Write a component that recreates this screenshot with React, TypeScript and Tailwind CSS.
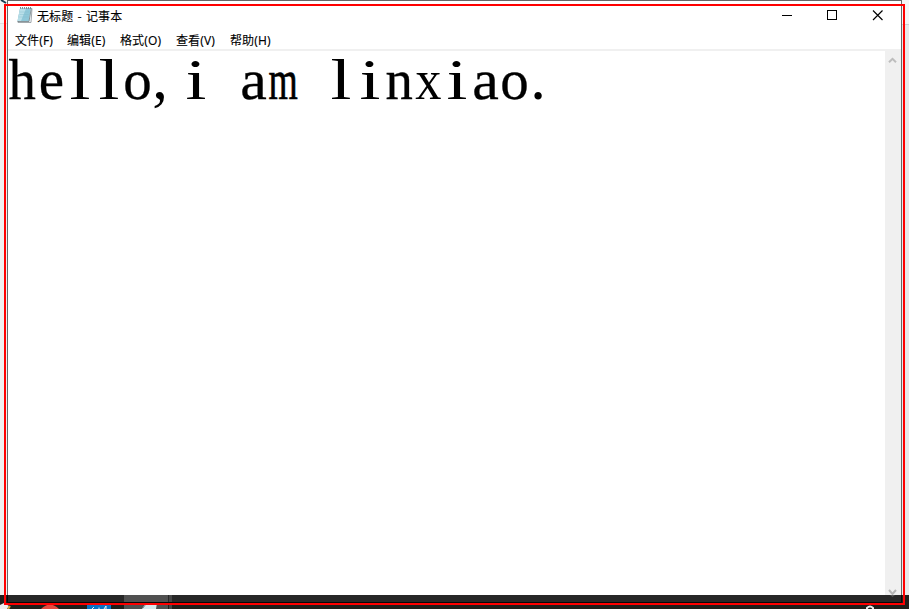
import React from "react";

const menus = [
  { label: "文件(F)", w: "w-[38px]" },
  { label: "编辑(E)", w: "w-[39px]" },
  { label: "格式(O)", w: "w-[42px]" },
  { label: "查看(V)", w: "w-[40px]" },
  { label: "帮助(H)", w: "w-[41px]" },
];

// Horizontal fit of each glyph inside its fixed 29px cell
const glyphFit: Record<string, string> = {
  h: "scale-x-[0.96] [-webkit-text-stroke:0.3px_#000]",
  e: "[-webkit-text-stroke:0.3px_#000]",
  l: "scale-x-[1.32] -translate-x-px",
  i: "scale-x-[1.32] -translate-x-px",
  a: "scale-x-[1.05] -translate-x-px [-webkit-text-stroke:0.3px_#000]",
  m: "scale-x-[0.66] [-webkit-text-stroke:0.7px_#000]",
  x: "scale-x-[0.92]",
  n: "scale-x-[0.96] [-webkit-text-stroke:0.3px_#000]",
  o: "-translate-x-px [-webkit-text-stroke:0.3px_#000]",
  ",": "-translate-x-[7px] scale-[1.1]",
  ".": "-translate-x-[6px] scale-[1.1]",
};

function NotepadIcon() {
  return (
    <svg width="18" height="18" viewBox="0 0 18 18" className="block">
      <path d="M4.5 2.5H16L15 16.5H2Z" fill="#f6fbfd" stroke="#8b9398" strokeWidth=".8" />
      <path d="M4 2.5H14.8L12.8 15H1.5Z" fill="#8fc8d9" />
      <path d="M4 2.5H10L5 15H1.5Z" fill="#b9dfe9" />
      <path d="M4 6H13M3.6 8.5H12.7M3.2 11H12.5" stroke="#83bac9" strokeWidth=".4" />
      <path d="M1.5 15.5H13L15.2 3" fill="none" stroke="#6d7b80" strokeWidth=".8" />
      <path d="M4 1.9H15.5" stroke="#55636a" strokeWidth="1.4" strokeDasharray="1 1" />
    </svg>
  );
}

function Chevron() {
  return (
    <svg width="9" height="7" viewBox="0 0 9 7" className="-ml-px">
      <path d="M1 5.3L4.5 1.8L8 5.3" fill="none" stroke="#bdbdbd" strokeWidth="2" />
    </svg>
  );
}

export default function App() {
  return (
    <div className="relative flex h-[609px] w-[909px] flex-col overflow-hidden bg-white font-['Noto_Sans','Noto_Sans_CJK_SC',sans-serif] text-black">
      <div className="flex h-[595px]">
        <div className="flex w-[7px] flex-col">
          <div className="h-6 border-b border-[#dedede] bg-[#f6f6f6]" />
          <div className="flex-1 bg-[#f0f0f0]" />
        </div>
        <div className="flex w-[895px] flex-col border-x border-t border-[#666]">
          <header className="flex h-[29px] items-center">
            <div className="ml-2 -mt-px">
              <NotepadIcon />
            </div>
            <h1 className="ml-[3px] mt-px whitespace-nowrap font-['Noto_Sans_CJK_SC',sans-serif] text-[12px] leading-[18px] tracking-[0.1px] [word-spacing:1.4px] [-webkit-text-stroke:0.1px_#000]">无标题 - 记事本</h1>
            <svg width="103" height="13" viewBox="0 0 103 13" className="ml-auto mr-[16px]" shapeRendering="crispEdges">
              <path d="M0 6.5H10" stroke="#000" />
              <rect x="45.5" y="1.5" width="9" height="9" fill="none" stroke="#000" />
              <path d="M91 1.5L100.5 11M100.5 1.5L91 11" stroke="#000" strokeWidth="1.15" shapeRendering="auto" />
            </svg>
          </header>
          <nav className="flex h-[19px] items-center gap-[14px] pl-[7px] pt-[3px] text-[12px] leading-4 [-webkit-text-stroke:0.1px_#000]">
            {menus.map((m) => (
              <span key={m.label} className={`${m.w} whitespace-nowrap tracking-[0.12px]`}>
                {m.label}
              </span>
            ))}
          </nav>
          <div className="flex min-h-0 flex-1 border-t-2 border-[#f0f0f0]">
            <div className="h-full w-[877px] bg-white">
              <p className="flex whitespace-pre font-['Liberation_Serif',serif] text-[57px] leading-[58px]">
                {Array.from("hello,i am linxiao.").map((c, i) => (
                  <span key={i} className="flex w-[29px] shrink-0 justify-center">
                    <span className={`inline-block origin-[50%_78%] ${glyphFit[c] ?? ""}`}>{c}</span>
                  </span>
                ))}
              </p>
            </div>
            <div className="flex flex-1 flex-col items-center justify-between bg-[#f0f0f0] pt-[6px]">
              <Chevron />
            </div>
          </div>
        </div>
        <div className="flex w-[7px] flex-col">
          <div className="h-[25px] border-b border-[#d0d0d0] bg-[#f5f5f5]" />
          <div className="flex-1 bg-[#e8e8e8]" />
        </div>
      </div>

      <footer className="flex h-[14px] bg-[#201e1a]">
        <div className="w-[7px]" />
        <svg width="902" height="14" viewBox="7 0 902 14">
          <rect x="7" width="895" height="7" fill="#272727" />
          <rect x="124" width="44" height="14" fill="#505050" />
          <rect x="169" width="3" height="14" fill="#454545" />
          <path d="M7.5 0V7.5H901.5V0" fill="none" stroke="#080808" />
          <path d="M41 14Q50 5 59 14Z" fill="#e34b40" />
          <rect x="87" y="9" width="24" height="5" fill="#0872c4" />
          <path d="M92 14L94 12M99 14V12.5M104 14L106 11V14" stroke="#e5f0f8" strokeWidth="1" fill="none" />
          <path d="M142 14L146 8H157L156 14Z" fill="#d7e9ed" />
          <path d="M143 13L146 9" stroke="#7c9096" />
          <path d="M867 14V13Q870 10 873 13V14" fill="none" stroke="#eee" strokeWidth="2" />
        </svg>
      </footer>

      {/* Desktop details around the window and its red selection frame */}
      <svg className="absolute left-0 top-0" width="909" height="609" viewBox="0 0 909 609">
        <path d="M1 0L6 3" stroke="#183e52" strokeWidth="2" />
        <path d="M0 609V605L4 603L9 606L7 609Z" fill="#eee" />
        <path d="M8 609L10 606" stroke="#d1a642" strokeWidth="2" />
        <path d="M889 590L892.5 594L896 590" fill="none" stroke="#b5b5b5" strokeWidth="2" />
        <path d="M890 595H895L892.5 597Z" fill="#555" />
        <rect x="5" y="5" width="899" height="599" fill="none" stroke="#f00" strokeWidth="2" />
      </svg>
    </div>
  );
}
